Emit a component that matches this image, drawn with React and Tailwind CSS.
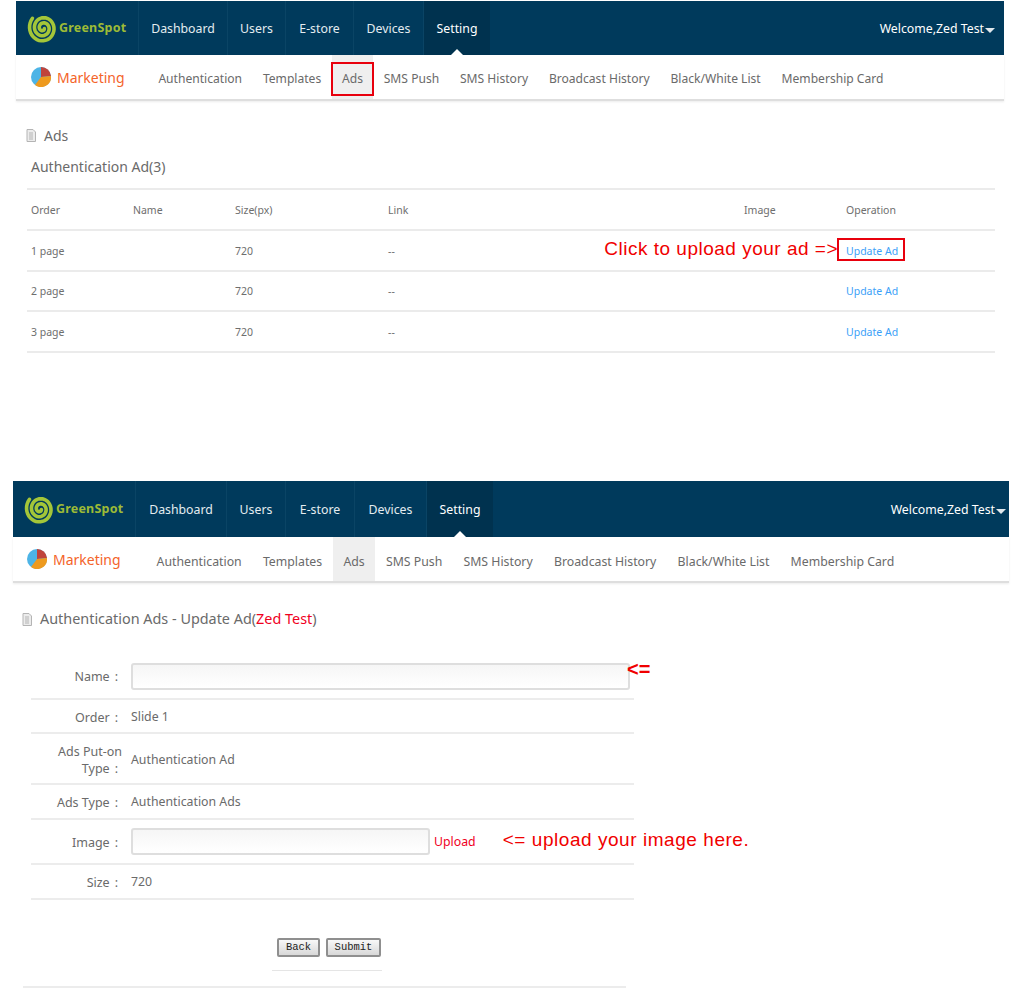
const font = { fontFamily: '"Noto Sans", "Open Sans", sans-serif' };
const arial = { fontFamily: '"Liberation Sans", sans-serif' };

const subItems = [
  "Authentication",
  "Templates",
  "Ads",
  "SMS Push",
  "SMS History",
  "Broadcast History",
  "Black/White List",
  "Membership Card",
];

// logo swirl, inner end to outer end
const swirl = (() => {
  const pts = [];
  for (let i = 0; i <= 90; i++) {
    const t = i / 90;
    const a = 0.4 + t * Math.PI * 5.1;
    const r = 1.5 + t * 12.5;
    pts.push(`${(16 + r * Math.cos(a)).toFixed(2)} ${(17 + r * 1.05 * Math.sin(a)).toFixed(2)}`);
  }
  return "M" + pts.join("L");
})();

function Logo() {
  return (
    <svg width="32" height="34" viewBox="0 0 32 34" className="shrink-0">
      <path d={swirl} fill="none" stroke="#a4c639" strokeWidth="3.6" strokeLinecap="round" />
    </svg>
  );
}

function Pie() {
  return (
    <svg width="20" height="20" viewBox="0 0 20 20" className="shrink-0">
      <circle cx="10" cy="10" r="10" fill="#4db4e6" />
      <path d="M10 10 L10 0 A10 10 0 0 1 20 9 Z" fill="#c0443c" />
      <path d="M10 10 L20 9 A10 10 0 0 1 4 18 Z" fill="#ee9a1e" />
    </svg>
  );
}

function DocIcon() {
  return (
    <svg width="10" height="13" viewBox="0 0 10 13" className="shrink-0">
      <path d="M1 .5h6l2.500 2.500v9.500h-8.500z" fill="#ececec" stroke="#b4b4b4" />
      <path d="M3 4h4M3 6h4M3 8h4M3 10h4" stroke="#b4b4b4" strokeWidth="1" />
    </svg>
  );
}

function Caret() {
  return <span className="ml-px mt-[3px] h-0 w-0 border-x-[5px] border-t-[5px] border-x-transparent border-t-[#dfe7ec]" />;
}

function TopNav({ items, welcomeClass, heightClass }) {
  return (
    <div className={`flex bg-[#003a5c] text-[12.3px] text-[#e4ecf0] ${heightClass}`}>
      <div className="flex w-[122px] shrink-0 items-center pl-[11px]">
        <Logo />
        <span className="text-[12.500px] font-bold tracking-[0.2px] text-[#9dbb36]">GreenSpot</span>
      </div>
      {items.map((it) => (
        <div
          key={it.label}
          className={`relative flex shrink-0 items-center justify-center border-l border-[#0a4465] pt-[2px] ${it.w} ${
            it.label === "Setting" ? "bg-[#00324f] text-white" : ""
          }`}
        >
          {it.label}
          {it.label === "Setting" && (
            <span className="absolute bottom-0 left-1/2 h-0 w-0 -translate-x-1/2 border-x-[6px] border-b-[6px] border-x-transparent border-b-white" />
          )}
        </div>
      ))}
      <div className={`ml-auto flex items-center pt-[2px] text-white ${welcomeClass}`}>
        Welcome,Zed Test
        <Caret />
      </div>
    </div>
  );
}

function SubNav({ markClass, textClass, boxed, itemClass }) {
  return (
    <div className="flex h-[46px] items-center border-b-2 border-[#dedede] shadow-[0_1px_2px_rgba(0,0,0,0.08)]">
      <div className={`flex shrink-0 items-center gap-[6px] ${markClass}`}>
        <Pie />
        <span className="text-[14px] text-[#f4642a]">Marketing</span>
      </div>
      <div className={`flex h-full ${textClass}`}>
        {subItems.map((s) => (
          <div
            key={s}
            className={`relative flex h-full items-center text-[#6a6a6a] ${itemClass} ${s === "Ads" ? "bg-[#efefef]" : ""}`}
          >
            {s}
            {s === "Ads" && boxed && (
              <span className="absolute inset-x-[-1px] top-[7px] bottom-[3px] border-2 border-[#e8000d]" />
            )}
          </div>
        ))}
      </div>
    </div>
  );
}

function AdRow({ n, note, rowClass }) {
  return (
    <tr className={`border-b-2 border-[#ebebeb] text-[10.500px] text-[#6e6e6e] [&>td]:pl-1 [&>td]:pt-[2px] ${rowClass}`}>
      <td>{n} page</td>
      <td></td>
      <td>720</td>
      <td>--</td>
      <td></td>
      <td>
        <span className="relative inline-block text-[#3b9ff8]">
          Update Ad
          {note && (
            <>
              <span className="absolute left-[-9px] right-[-7px] top-[-6px] bottom-[-2px] border-2 border-[#e8000d]" />
              <span
                className="absolute right-[calc(100%+8px)] top-[-8px] whitespace-nowrap text-[19px] leading-[26px] tracking-[0.5px] text-[#f00000]"
                style={arial}
              >
                Click to upload your ad =&gt;
              </span>
            </>
          )}
        </span>
      </td>
    </tr>
  );
}

function Label({ text }) {
  return (
    <>
      {text}
      <span className="ml-[5px]">:</span>
    </>
  );
}

function FormRow({ label, children, rowClass }) {
  return (
    <div className={`flex items-center border-b-2 border-[#ececec] ${rowClass}`}>
      <div className="w-[87px] shrink-0 pt-[2px] text-right text-[12.500px] leading-[17px] text-[#6a6a6a]">{label}</div>
      <div className="ml-[13px] flex min-w-0 flex-1 items-center pt-[2px] text-[#6a6a6a]">{children}</div>
    </div>
  );
}

const inputClass =
  "h-[27px] shrink-0 rounded-[3px] border-2 border-[#dedede] bg-gradient-to-b from-[#f6f6f6] to-white";
const buttonClass =
  "h-[19px] rounded-[2px] border-2 border-[#8f8f8f] bg-gradient-to-b from-[#f8f8f8] to-[#d8d8d8] text-[10.500px] leading-none text-[#222]";

export default function App() {
  return (
    <div className="h-[1004px] overflow-hidden bg-white" style={font}>
      <div className="ml-[16px] w-[988px] pt-px">
        <TopNav
          heightClass="h-[54px]"
          welcomeClass="pr-[9px]"
          items={[
            { label: "Dashboard", w: "w-[89px]" },
            { label: "Users", w: "w-[58px]" },
            { label: "E-store", w: "w-[68px]" },
            { label: "Devices", w: "w-[70px]" },
            { label: "Setting", w: "w-[67px]" },
          ]}
        />
        <SubNav boxed markClass="w-[132px] pl-[15px]" itemClass="px-[10.400px] pt-[4px]" textClass="text-[12.100px]" />
        <div className="mt-[25px] flex h-[19px] items-center gap-[8px] pl-[10px] text-[14px] text-[#6a6a6a]">
          <DocIcon />
          Ads
        </div>
        <div className="mt-[11px] h-[22px] pl-[15px] text-[14px] leading-[22px] text-[#6a6a6a]">Authentication Ad(3)</div>
        <div className="mt-[10px] pl-[11px]">
          <table className="w-[968px] table-fixed border-t-2 border-[#ebebeb]">
            <colgroup>
              <col className="w-[102px]" />
              <col className="w-[102px]" />
              <col className="w-[153px]" />
              <col className="w-[356px]" />
              <col className="w-[102px]" />
              <col />
            </colgroup>
            <thead>
              <tr className="h-[41px] border-b-2 border-[#ebebeb] text-left text-[10.500px] text-[#6e6e6e] [&>th]:pl-1 [&>th]:pt-[2px] [&>th]:font-normal">
                <th>Order</th>
                <th>Name</th>
                <th>Size(px)</th>
                <th>Link</th>
                <th>Image</th>
                <th>Operation</th>
              </tr>
            </thead>
            <tbody>
              <AdRow n={1} note rowClass="h-[41px]" />
              <AdRow n={2} rowClass="h-[40px]" />
              <AdRow n={3} rowClass="h-[41px]" />
            </tbody>
          </table>
        </div>
      </div>

      <div className="ml-[13px] mt-[128px] w-[996px]">
        <TopNav
          heightClass="h-[56px]"
          welcomeClass="pr-[3px]"
          items={[
            { label: "Dashboard", w: "w-[91px]" },
            { label: "Users", w: "w-[59px]" },
            { label: "E-store", w: "w-[69px]" },
            { label: "Devices", w: "w-[72px]" },
            { label: "Setting", w: "w-[67px]" },
          ]}
        />
        <SubNav markClass="w-[133px] pl-[14px]" itemClass="px-[10.600px] pt-[6px]" textClass="text-[12.300px]" />
        <div className="mt-[25px] flex h-[22px] items-center gap-[8px] pl-[9px] text-[14.400px] text-[#6a6a6a]">
          <DocIcon />
          <span>
            Authentication Ads - Update Ad(<span className="text-[#f0001e]">Zed Test</span>)
          </span>
        </div>

        <div className="ml-[18px] mt-[20px] w-[603px] text-[12.300px]">
          <FormRow
            label={
              <span className="block pt-[2px]">
                <Label text="Name" />
              </span>
            }
            rowClass="h-[50px]"
          >
            <div className={`relative mt-[3px] w-[499px] ${inputClass}`}>
              <span className="absolute left-full top-[-5px] ml-[-1px] text-[20px] font-bold leading-[18px] text-[#f00000]" style={arial}>
                &lt;=
              </span>
            </div>
          </FormRow>
          <FormRow label={<Label text="Order" />} rowClass="h-[34px]">Slide 1</FormRow>
          <FormRow
            label={
              <>
                <span className="-mr-1 block">Ads Put-on</span>
                <Label text="Type" />
              </>
            }
            rowClass="h-[51px]"
          >
            <span className="pt-[2px]">Authentication Ad</span>
          </FormRow>
          <FormRow label={<Label text="Ads Type" />} rowClass="h-[35px]">Authentication Ads</FormRow>
          <FormRow label={<Label text="Image" />} rowClass="h-[45px]">
            <div className={`mb-[2px] w-[299px] ${inputClass}`} />
            <span className="ml-[4px] shrink-0 text-[#f0001e]">Upload</span>
            <span className="mb-[5px] ml-[27px] shrink-0 whitespace-nowrap text-[19px] tracking-[0.55px] text-[#f00000]" style={arial}>
              &lt;= upload your image here.
            </span>
          </FormRow>
          <FormRow label={<Label text="Size" />} rowClass="h-[35px]">720</FormRow>
          <div
            className="ml-[241px] mt-[38px] flex w-[110px] gap-[6px] border-b border-[#e5e5e5] pb-[13px] pl-[5px]"
            style={{ fontFamily: '"Liberation Mono", monospace' }}
          >
            <button className={`w-[43px] ${buttonClass}`}>Back</button>
            <button className={`w-[55px] ${buttonClass}`}>Submit</button>
          </div>
        </div>
        <div className="ml-[10px] mt-[15px] w-[603px] border-b-2 border-[#ececec]" />
      </div>
    </div>
  );
}
